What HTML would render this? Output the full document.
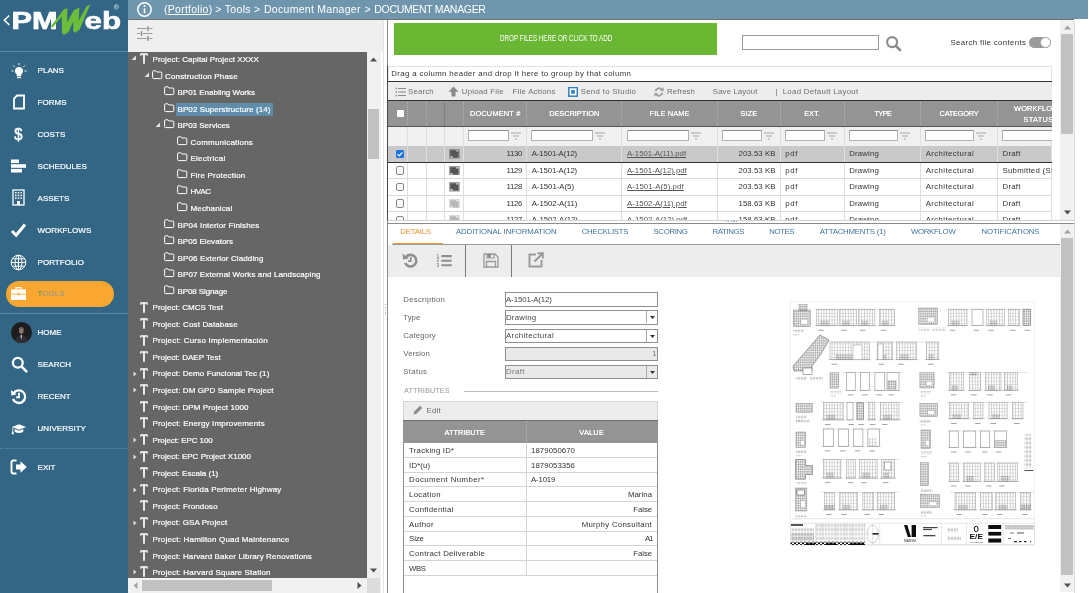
<!DOCTYPE html>
<html>
<head>
<meta charset="utf-8">
<title>Document Manager</title>
<style>
*{box-sizing:border-box;margin:0;padding:0}
html,body{width:1089px;height:593px;overflow:hidden;background:#fff;font-family:"Liberation Sans",sans-serif;font-size:8px;color:#333}
div,span,svg{position:absolute}
.t{white-space:nowrap;line-height:10px;height:10px}
.tab,.tn,.nl{margin-top:.7px}
.g,.gh{margin-top:.4px}
#side{left:0;top:0;width:128px;height:593px;background:#336685}
.nl{left:37.5px;color:#fff;font-size:8px;letter-spacing:.05px;white-space:nowrap;line-height:10px;-webkit-text-stroke:.2px currentColor}
#hdr{left:128px;top:0;width:960px;height:19px;background:#7096ad}
#hdr .t{color:#fff;font-size:10.5px;line-height:19px;height:19px;top:0}
#treebar{left:128px;top:19px;width:255px;height:33px;background:#efefef}
#tree{left:128px;top:52px;width:239px;height:526px;background:#666;overflow:hidden}
.tn{color:#fff;font-size:8px;white-space:nowrap;line-height:10px;height:10px;-webkit-text-stroke:.2px #fff}
.g{color:#333;font-size:7.8px;white-space:nowrap;line-height:10px;height:10px}
.gh{color:#fff;font-size:7.4px;white-space:nowrap;line-height:10px;height:10px;text-shadow:0 0 .3px #fff}
.tab{color:#41749a;font-size:7.8px;white-space:nowrap;line-height:10px;height:10px;letter-spacing:.05px}
</style>
</head>
<body><div id="root" style="left:0;top:0;width:1089px;height:593px;will-change:transform;overflow:hidden">
<div id="side">
<svg style="left:0;top:0;will-change:transform" width="128" height="50" viewBox="0 0 128 50"><path d="M9.300 15.500L4.300 20.200L9.300 24.900" fill="none" stroke="#fff" stroke-width="1.500"/><text transform="translate(11.600,28.800) scale(1.300,1)" font-family="Liberation Sans" font-weight="bold" font-size="23.600" fill="#fff" stroke="#fff" stroke-width=".7">PM</text><text transform="translate(84.600,28.800) scale(1.330,1)" font-family="Liberation Sans" font-weight="bold" font-size="23.600" fill="#fff" stroke="#fff" stroke-width=".6">eb</text><g fill="#6cbd3a"><path d="M50.800 26.300L64.800 8.600L67.400 9.600L52.600 27.800z"/><path d="M61.600 11.500L67.400 8.200L67 30L63.800 35L62 32.500z"/><path d="M63.800 35L62 32L74 10L79.400 7.800L68.600 32z"/><path d="M73.400 11L79.400 7.800L78.200 28.500L75 32.800L73.200 30.500z"/><path d="M75 32.800L73.500 30L86.600 6.200L90.200 4.400L79.600 29.500z"/></g><circle cx="116.400" cy="6.800" r="2.200" fill="none" stroke="#b8c9d5" stroke-width=".7"/><text x="115.100" y="8.300" font-family="Liberation Sans" font-size="3.600" font-weight="bold" fill="#b8c9d5">R</text></svg>
<div style="left:0;top:51px;width:128px;height:1px;background:#5c88a4"></div>
<div style="left:0;top:313px;width:128px;height:1px;background:#5f8aa5"></div>
<div style="left:0;top:448px;width:128px;height:0;border-top:1px dotted #5f8aa5"></div>
<div style="left:6px;top:281.300px;width:108px;height:25.400px;border-radius:13px;background:#f9a730"></div>
<span class="nl" style="top:65.0px;color:#fff">PLANS</span>
<span class="nl" style="top:97.0px;color:#fff">FORMS</span>
<span class="nl" style="top:129.0px;color:#fff">COSTS</span>
<span class="nl" style="top:161.0px;color:#fff">SCHEDULES</span>
<span class="nl" style="top:193.0px;color:#fff">ASSETS</span>
<span class="nl" style="top:225.0px;color:#fff">WORKFLOWS</span>
<span class="nl" style="top:257.0px;color:#fff">PORTFOLIO</span>
<span class="nl" style="top:288.5px;color:#a39a80"><span style="position:static;color:#6f9d4e">T</span>OOLS</span>
<span class="nl" style="top:327.5px;color:#fff">HOME</span>
<span class="nl" style="top:359.5px;color:#fff">SEARCH</span>
<span class="nl" style="top:391.5px;color:#fff">RECENT</span>
<span class="nl" style="top:423.0px;color:#fff">UNIVERSITY</span>
<span class="nl" style="top:462.0px;color:#fff">EXIT</span>
<svg style="left:10px;top:62px" width="18" height="18" viewBox="0 0 18 18"><path d="M9 5a4 4 0 0 0-2.3 7.3V14h4.6v-1.7A4 4 0 0 0 9 5z" fill="#fff"/><rect x="7" y="14.6" width="4" height="1.6" fill="#fff"/><g stroke="#fff" stroke-width="1"><path d="M9 1v2.2M3.2 3.6l1.5 1.5M14.8 3.6l-1.5 1.5M1.5 9h2M14.5 9h2"/></g></svg>
<svg style="left:12px;top:94px" width="14" height="17" viewBox="0 0 14 17"><path d="M5 1.5h7v13h-10v-10z" fill="none" stroke="#fff" stroke-width="1.8" stroke-linejoin="miter"/></svg>
<svg style="left:10px;top:125px;will-change:transform" width="18" height="20" viewBox="0 0 18 20"><text x="3.200" y="15.400" font-family="Liberation Sans" font-size="16.500" fill="#fff" stroke="#fff" stroke-width=".5" transform="translate(1.3,0) scale(.9,1)">$</text></svg>
<svg style="left:11px;top:159px" width="16" height="14" viewBox="0 0 16 14"><rect x="0" y="0.5" width="8" height="3.6" fill="#fff"/><rect x="0" y="5.2" width="15" height="3.6" fill="#fff"/><rect x="0" y="9.9" width="11" height="3.6" fill="#fff"/></svg>
<svg style="left:12px;top:189px" width="13" height="17" viewBox="0 0 13 17"><rect x="1" y="1" width="11" height="15" fill="none" stroke="#fff" stroke-width="1.3"/><g fill="#fff"><rect x="3" y="3" width="1.5" height="1.5"/><rect x="5.7" y="3" width="1.5" height="1.5"/><rect x="8.4" y="3" width="1.5" height="1.5"/><rect x="3" y="5.7" width="1.5" height="1.5"/><rect x="5.7" y="5.7" width="1.5" height="1.5"/><rect x="8.4" y="5.7" width="1.5" height="1.5"/><rect x="3" y="8.4" width="1.5" height="1.5"/><rect x="5.7" y="8.4" width="1.5" height="1.5"/><rect x="8.4" y="8.4" width="1.5" height="1.5"/><rect x="5" y="12" width="3" height="4"/></g></svg>
<svg style="left:10px;top:222px" width="17" height="16" viewBox="0 0 17 16"><path d="M2 9l4.2 4.2L15 2.5" fill="none" stroke="#fff" stroke-width="3"/></svg>
<svg style="left:10px;top:254px" width="17" height="17" viewBox="0 0 17 17"><g fill="none" stroke="#fff" stroke-width="1"><circle cx="8.5" cy="8.5" r="7.3"/><ellipse cx="8.5" cy="8.5" rx="3.4" ry="7.3"/><path d="M8.5 1.2v14.6M1.2 8.5h14.6M2.3 4.8h12.4M2.3 12.2h12.4"/></g></svg>
<svg style="left:10px;top:286px" width="17" height="15" viewBox="0 0 17 15"><path d="M6 3.4V1.6h5v1.8" fill="none" stroke="#fff" stroke-width="1.3"/><rect x="1" y="3.4" width="15" height="10.6" fill="#fff"/><path d="M1 8.2h15" stroke="#f9a730" stroke-width=".8"/><rect x="7.4" y="7.2" width="2.2" height="2" fill="#f9a730"/></svg>
<svg style="left:11px;top:322px" width="21" height="21" viewBox="0 0 21 21"><circle cx="10.500" cy="10.500" r="10.500" fill="#1e1d20"/><path d="M4 19q1.500-5 5-5.500l1.500 4 1.500-4q3.500.5 5 5.500a10.500 10.500 0 0 1-13 0z" fill="#2d2c31"/><ellipse cx="10.300" cy="8.600" rx="2.300" ry="3.300" fill="#8d7464"/><path d="M7.800 6.600q2.500-2.600 5 0l-.2 1.200q-2.300-1.400-4.600 0z" fill="#6b6b6b"/><path d="M10.300 12.500l-1 1.200 1 4 1-4z" fill="#b9b9b9"/></svg>
<svg style="left:10.5px;top:356px" width="18" height="18" viewBox="0 0 18 18"><circle cx="6.800" cy="6.800" r="4.900" fill="none" stroke="#fff" stroke-width="2.300"/><path d="M10.800 10.800l4.600 4.600" stroke="#fff" stroke-width="2.600" stroke-linecap="round"/></svg>
<svg style="left:10px;top:388px" width="18" height="17" viewBox="0 0 18 17"><path d="M3.6 5.2A6.3 6.3 0 1 1 3 11" fill="none" stroke="#fff" stroke-width="2.300"/><path d="M1 2l.4 5.400 5.200-.8z" fill="#fff"/><path d="M9 4.800v4.400H6.200" fill="none" stroke="#fff" stroke-width="1.900"/></svg>
<svg style="left:10.5px;top:422.5px" width="16" height="12" viewBox="0 0 20 15"><path d="M10 1.500L1 5l9 3.500L19 5z" fill="#fff"/><path d="M4.600 7.400v3.600q5.400 3 10.800 0V7.400L10 9.600z" fill="#fff"/><path d="M2.200 5.600v6" stroke="#fff" stroke-width="1"/><path d="M1.300 11h1.800l.4 3h-2.600z" fill="#fff"/></svg>
<svg style="left:10px;top:459px" width="18" height="16" viewBox="0 0 18 16"><path d="M6.500 1.500H3.200a1.700 1.700 0 0 0-1.700 1.700v9.600a1.700 1.700 0 0 0 1.700 1.700h3.300" fill="none" stroke="#fff" stroke-width="1.900"/><path d="M6 5.400h4.500V2.200L16.800 8l-6.300 5.800v-3.200H6z" fill="#fff"/></svg>
</div>
<div id="hdr">
<svg style="left:9px;top:2px" width="15" height="15" viewBox="0 0 15 15"><circle cx="7.5" cy="7.500" r="6.700" fill="none" stroke="#fff" stroke-width="1.500"/><rect x="6.700" y="6.300" width="1.600" height="4.900" fill="#fff"/><circle cx="7.500" cy="4.100" r="1" fill="#fff"/></svg>
<span class="t" style="left:36px;letter-spacing:0.263px;">(<span style="position:static;text-decoration:underline">Portfolio</span>)</span>
<span class="t" style="left:87.2px;letter-spacing:0.331px;">&gt; Tools &gt;</span>
<span class="t" style="left:136px;letter-spacing:0.281px;">Document Manager</span>
<span class="t" style="left:236.6px;letter-spacing:-0.233px;">&gt;</span>
<span class="t" style="left:246.3px;letter-spacing:-0.324px;">DOCUMENT MANAGER</span>
</div>
<div id="treebar">
<svg style="left:9px;top:7px" width="16" height="15" viewBox="0 0 16 15"><g stroke="#9c9c9c" stroke-width="1"><path d="M0 2.500h15.500M0 7.500h15.500M0 12.500h15.500"/></g><g fill="#8e8e8e" stroke="#efefef" stroke-width=".6"><rect x="9.900" y="-.1" width="2.100" height="5.200"/><rect x="3.400" y="4.900" width="2.100" height="5.200"/><rect x="9.900" y="9.900" width="2.100" height="5.200"/></g></svg>
</div>
<div id="tree">
<svg style="left:12px;top:1.35px" width="8" height="11" viewBox="0 0 8 11"><path d="M0.300 0.300h7.400v2.600h-1v-1.100h-1.850v8.900h-1.700v-8.900h-1.850v1.100h-1z" fill="#fff"/></svg>
<svg style="left:2.5px;top:3.35px" width="5.500" height="5.500" viewBox="0 0 5 5"><path d="M4.600 0.400v4.200h-4.200z" fill="#e2e2e2"/></svg>
<span class="tn" style="left:24.5px;top:2.35px;letter-spacing:0.047px;">Project: Capital Project XXXX</span>
<svg style="left:24px;top:17.6px" width="11" height="10" viewBox="0 0 11 10"><path d="M0.600 1.800a1 1 0 0 1 1-1h2.200l1 1.200h4a1 1 0 0 1 1 1v4.600a1 1 0 0 1-1 1h-7.200a1 1 0 0 1-1-1z" fill="none" stroke="#fff" stroke-width="1"/></svg>
<svg style="left:15.5px;top:19.9px" width="5.500" height="5.500" viewBox="0 0 5 5"><path d="M4.600 0.400v4.200h-4.200z" fill="#e2e2e2"/></svg>
<span class="tn" style="left:37px;top:18.9px;letter-spacing:0.166px;">Construction Phase</span>
<svg style="left:35.7px;top:34.15px" width="11" height="10" viewBox="0 0 11 10"><path d="M0.600 1.800a1 1 0 0 1 1-1h2.200l1 1.200h4a1 1 0 0 1 1 1v4.600a1 1 0 0 1-1 1h-7.200a1 1 0 0 1-1-1z" fill="none" stroke="#fff" stroke-width="1"/></svg>
<span class="tn" style="left:49.5px;top:35.45px;letter-spacing:-0.009px;">BP01 Enabling Works</span>
<svg style="left:35.7px;top:50.7px" width="11" height="10" viewBox="0 0 11 10"><path d="M0.600 1.800a1 1 0 0 1 1-1h2.200l1 1.200h4a1 1 0 0 1 1 1v4.600a1 1 0 0 1-1 1h-7.200a1 1 0 0 1-1-1z" fill="none" stroke="#fff" stroke-width="1"/></svg>
<div style="left:48px;top:50.5px;width:97px;height:13px;background:#5f8cab"></div>
<span class="tn" style="left:49.5px;top:52px;letter-spacing:0.096px;">BP02 Superstructure (14)</span>
<svg style="left:35.7px;top:67.25px" width="11" height="10" viewBox="0 0 11 10"><path d="M0.600 1.800a1 1 0 0 1 1-1h2.200l1 1.200h4a1 1 0 0 1 1 1v4.600a1 1 0 0 1-1 1h-7.200a1 1 0 0 1-1-1z" fill="none" stroke="#fff" stroke-width="1"/></svg>
<svg style="left:27.2px;top:69.55px" width="5.500" height="5.500" viewBox="0 0 5 5"><path d="M4.600 0.400v4.200h-4.200z" fill="#e2e2e2"/></svg>
<span class="tn" style="left:49.5px;top:68.55px;letter-spacing:-0.013px;">BP03 Services</span>
<svg style="left:48.9px;top:83.8px" width="11" height="10" viewBox="0 0 11 10"><path d="M0.600 1.800a1 1 0 0 1 1-1h2.200l1 1.200h4a1 1 0 0 1 1 1v4.600a1 1 0 0 1-1 1h-7.200a1 1 0 0 1-1-1z" fill="none" stroke="#fff" stroke-width="1"/></svg>
<span class="tn" style="left:62.5px;top:85.1px;letter-spacing:0.209px;">Communications</span>
<svg style="left:48.9px;top:100.35px" width="11" height="10" viewBox="0 0 11 10"><path d="M0.600 1.800a1 1 0 0 1 1-1h2.200l1 1.200h4a1 1 0 0 1 1 1v4.600a1 1 0 0 1-1 1h-7.200a1 1 0 0 1-1-1z" fill="none" stroke="#fff" stroke-width="1"/></svg>
<span class="tn" style="left:62.5px;top:101.65px;letter-spacing:0.255px;">Electrical</span>
<svg style="left:48.9px;top:116.9px" width="11" height="10" viewBox="0 0 11 10"><path d="M0.600 1.800a1 1 0 0 1 1-1h2.200l1 1.200h4a1 1 0 0 1 1 1v4.600a1 1 0 0 1-1 1h-7.200a1 1 0 0 1-1-1z" fill="none" stroke="#fff" stroke-width="1"/></svg>
<span class="tn" style="left:62.5px;top:118.2px;letter-spacing:0.199px;">Fire Protection</span>
<svg style="left:48.9px;top:133.45px" width="11" height="10" viewBox="0 0 11 10"><path d="M0.600 1.800a1 1 0 0 1 1-1h2.200l1 1.200h4a1 1 0 0 1 1 1v4.600a1 1 0 0 1-1 1h-7.200a1 1 0 0 1-1-1z" fill="none" stroke="#fff" stroke-width="1"/></svg>
<span class="tn" style="left:62.5px;top:134.75px;letter-spacing:-0.408px;">HVAC</span>
<svg style="left:48.9px;top:150px" width="11" height="10" viewBox="0 0 11 10"><path d="M0.600 1.800a1 1 0 0 1 1-1h2.200l1 1.200h4a1 1 0 0 1 1 1v4.600a1 1 0 0 1-1 1h-7.200a1 1 0 0 1-1-1z" fill="none" stroke="#fff" stroke-width="1"/></svg>
<span class="tn" style="left:62.5px;top:151.3px;letter-spacing:0.134px;">Mechanical</span>
<svg style="left:35.7px;top:166.55px" width="11" height="10" viewBox="0 0 11 10"><path d="M0.600 1.800a1 1 0 0 1 1-1h2.200l1 1.200h4a1 1 0 0 1 1 1v4.600a1 1 0 0 1-1 1h-7.200a1 1 0 0 1-1-1z" fill="none" stroke="#fff" stroke-width="1"/></svg>
<span class="tn" style="left:49.5px;top:167.85px;letter-spacing:0.150px;">BP04 Interior Finishes</span>
<svg style="left:35.7px;top:183.1px" width="11" height="10" viewBox="0 0 11 10"><path d="M0.600 1.800a1 1 0 0 1 1-1h2.200l1 1.200h4a1 1 0 0 1 1 1v4.600a1 1 0 0 1-1 1h-7.200a1 1 0 0 1-1-1z" fill="none" stroke="#fff" stroke-width="1"/></svg>
<span class="tn" style="left:49.5px;top:184.4px;letter-spacing:0.033px;">BP05 Elevators</span>
<svg style="left:35.7px;top:199.65px" width="11" height="10" viewBox="0 0 11 10"><path d="M0.600 1.800a1 1 0 0 1 1-1h2.200l1 1.200h4a1 1 0 0 1 1 1v4.600a1 1 0 0 1-1 1h-7.200a1 1 0 0 1-1-1z" fill="none" stroke="#fff" stroke-width="1"/></svg>
<span class="tn" style="left:49.5px;top:200.95px;letter-spacing:0.129px;">BP06 Exterior Cladding</span>
<svg style="left:35.7px;top:216.2px" width="11" height="10" viewBox="0 0 11 10"><path d="M0.600 1.800a1 1 0 0 1 1-1h2.200l1 1.200h4a1 1 0 0 1 1 1v4.600a1 1 0 0 1-1 1h-7.200a1 1 0 0 1-1-1z" fill="none" stroke="#fff" stroke-width="1"/></svg>
<span class="tn" style="left:49.5px;top:217.5px;letter-spacing:0.113px;">BP07 External Works and Landscaping</span>
<svg style="left:35.7px;top:232.75px" width="11" height="10" viewBox="0 0 11 10"><path d="M0.600 1.800a1 1 0 0 1 1-1h2.200l1 1.200h4a1 1 0 0 1 1 1v4.600a1 1 0 0 1-1 1h-7.200a1 1 0 0 1-1-1z" fill="none" stroke="#fff" stroke-width="1"/></svg>
<span class="tn" style="left:49.5px;top:234.05px;letter-spacing:-0.104px;">BP08 Signage</span>
<svg style="left:12px;top:249.6px" width="8" height="11" viewBox="0 0 8 11"><path d="M0.300 0.300h7.400v2.600h-1v-1.100h-1.850v8.900h-1.700v-8.900h-1.850v1.100h-1z" fill="#fff"/></svg>
<span class="tn" style="left:24.5px;top:250.6px;letter-spacing:0.042px;">Project: CMCS Test</span>
<svg style="left:12px;top:266.15px" width="8" height="11" viewBox="0 0 8 11"><path d="M0.300 0.300h7.400v2.600h-1v-1.100h-1.850v8.900h-1.700v-8.900h-1.850v1.100h-1z" fill="#fff"/></svg>
<span class="tn" style="left:24.5px;top:267.15px;letter-spacing:0.134px;">Project: Cost Database</span>
<svg style="left:12px;top:282.7px" width="8" height="11" viewBox="0 0 8 11"><path d="M0.300 0.300h7.400v2.600h-1v-1.100h-1.850v8.900h-1.700v-8.900h-1.850v1.100h-1z" fill="#fff"/></svg>
<span class="tn" style="left:24.5px;top:283.7px;letter-spacing:0.208px;">Project: Curso Implementación</span>
<svg style="left:12px;top:299.25px" width="8" height="11" viewBox="0 0 8 11"><path d="M0.300 0.300h7.400v2.600h-1v-1.100h-1.850v8.900h-1.700v-8.900h-1.850v1.100h-1z" fill="#fff"/></svg>
<span class="tn" style="left:24.5px;top:300.25px;letter-spacing:0.032px;">Project: DAEP Test</span>
<svg style="left:12px;top:315.8px" width="8" height="11" viewBox="0 0 8 11"><path d="M0.300 0.300h7.400v2.600h-1v-1.100h-1.850v8.900h-1.700v-8.900h-1.850v1.100h-1z" fill="#fff"/></svg>
<svg style="left:4.5px;top:318.8px" width="4" height="6" viewBox="0 0 4 6"><path d="M0.500 0.500l3 2.500l-3 2.500z" fill="#ddd"/></svg>
<span class="tn" style="left:24.5px;top:316.8px;letter-spacing:0.090px;">Project: Demo Funcional Tec (1)</span>
<svg style="left:12px;top:332.35px" width="8" height="11" viewBox="0 0 8 11"><path d="M0.300 0.300h7.400v2.600h-1v-1.100h-1.850v8.900h-1.700v-8.900h-1.850v1.100h-1z" fill="#fff"/></svg>
<svg style="left:4.5px;top:335.35px" width="4" height="6" viewBox="0 0 4 6"><path d="M0.500 0.500l3 2.500l-3 2.500z" fill="#ddd"/></svg>
<span class="tn" style="left:24.5px;top:333.35px;letter-spacing:0.106px;">Project: DM GPD Sample Project</span>
<svg style="left:12px;top:348.9px" width="8" height="11" viewBox="0 0 8 11"><path d="M0.300 0.300h7.400v2.600h-1v-1.100h-1.850v8.900h-1.700v-8.900h-1.850v1.100h-1z" fill="#fff"/></svg>
<span class="tn" style="left:24.5px;top:349.9px;letter-spacing:0.070px;">Project: DPM Project 1000</span>
<svg style="left:12px;top:365.45px" width="8" height="11" viewBox="0 0 8 11"><path d="M0.300 0.300h7.400v2.600h-1v-1.100h-1.850v8.900h-1.700v-8.900h-1.850v1.100h-1z" fill="#fff"/></svg>
<span class="tn" style="left:24.5px;top:366.45px;letter-spacing:0.168px;">Project: Energy Improvements</span>
<svg style="left:12px;top:382px" width="8" height="11" viewBox="0 0 8 11"><path d="M0.300 0.300h7.400v2.600h-1v-1.100h-1.850v8.900h-1.700v-8.900h-1.850v1.100h-1z" fill="#fff"/></svg>
<svg style="left:4.5px;top:385px" width="4" height="6" viewBox="0 0 4 6"><path d="M0.500 0.500l3 2.500l-3 2.500z" fill="#ddd"/></svg>
<span class="tn" style="left:24.5px;top:383px;letter-spacing:-0.073px;">Project: EPC 100</span>
<svg style="left:12px;top:398.55px" width="8" height="11" viewBox="0 0 8 11"><path d="M0.300 0.300h7.400v2.600h-1v-1.100h-1.850v8.900h-1.700v-8.900h-1.850v1.100h-1z" fill="#fff"/></svg>
<svg style="left:4.5px;top:401.55px" width="4" height="6" viewBox="0 0 4 6"><path d="M0.500 0.500l3 2.500l-3 2.500z" fill="#ddd"/></svg>
<span class="tn" style="left:24.5px;top:399.55px;letter-spacing:0.009px;">Project: EPC Project X1000</span>
<svg style="left:12px;top:415.1px" width="8" height="11" viewBox="0 0 8 11"><path d="M0.300 0.300h7.400v2.600h-1v-1.100h-1.850v8.900h-1.700v-8.900h-1.850v1.100h-1z" fill="#fff"/></svg>
<span class="tn" style="left:24.5px;top:416.1px;letter-spacing:0.024px;">Project: Escala (1)</span>
<svg style="left:12px;top:431.65px" width="8" height="11" viewBox="0 0 8 11"><path d="M0.300 0.300h7.400v2.600h-1v-1.100h-1.850v8.900h-1.700v-8.900h-1.850v1.100h-1z" fill="#fff"/></svg>
<svg style="left:4.5px;top:434.65px" width="4" height="6" viewBox="0 0 4 6"><path d="M0.500 0.500l3 2.500l-3 2.500z" fill="#ddd"/></svg>
<span class="tn" style="left:24.5px;top:432.65px;letter-spacing:0.156px;">Project: Florida Perimeter Highway</span>
<svg style="left:12px;top:448.2px" width="8" height="11" viewBox="0 0 8 11"><path d="M0.300 0.300h7.400v2.600h-1v-1.100h-1.850v8.900h-1.700v-8.900h-1.850v1.100h-1z" fill="#fff"/></svg>
<span class="tn" style="left:24.5px;top:449.2px;letter-spacing:0.121px;">Project: Frondoso</span>
<svg style="left:12px;top:464.75px" width="8" height="11" viewBox="0 0 8 11"><path d="M0.300 0.300h7.400v2.600h-1v-1.100h-1.850v8.900h-1.700v-8.900h-1.850v1.100h-1z" fill="#fff"/></svg>
<svg style="left:4.5px;top:467.75px" width="4" height="6" viewBox="0 0 4 6"><path d="M0.500 0.500l3 2.500l-3 2.500z" fill="#ddd"/></svg>
<span class="tn" style="left:24.5px;top:465.75px;letter-spacing:0.089px;">Project: GSA Project</span>
<svg style="left:12px;top:481.3px" width="8" height="11" viewBox="0 0 8 11"><path d="M0.300 0.300h7.400v2.600h-1v-1.100h-1.850v8.900h-1.700v-8.900h-1.850v1.100h-1z" fill="#fff"/></svg>
<span class="tn" style="left:24.5px;top:482.3px;letter-spacing:0.187px;">Project: Hamilton Quad Maintenance</span>
<svg style="left:12px;top:497.85px" width="8" height="11" viewBox="0 0 8 11"><path d="M0.300 0.300h7.400v2.600h-1v-1.100h-1.850v8.900h-1.700v-8.900h-1.850v1.100h-1z" fill="#fff"/></svg>
<span class="tn" style="left:24.5px;top:498.85px;letter-spacing:0.122px;">Project: Harvard Baker Library Renovations</span>
<svg style="left:12px;top:514.4px" width="8" height="11" viewBox="0 0 8 11"><path d="M0.300 0.300h7.400v2.600h-1v-1.100h-1.850v8.900h-1.700v-8.900h-1.850v1.100h-1z" fill="#fff"/></svg>
<svg style="left:4.5px;top:517.4px" width="4" height="6" viewBox="0 0 4 6"><path d="M0.500 0.500l3 2.500l-3 2.500z" fill="#ddd"/></svg>
<span class="tn" style="left:24.5px;top:515.4px;letter-spacing:0.170px;">Project: Harvard Square Station</span>
</div>
<div style="left:367px;top:51px;width:13px;height:527px;background:#f1f1f1"></div>
<div style="left:368px;top:109px;width:11px;height:50px;background:#c1c1c1"></div>
<svg style="left:370px;top:57px" width="7" height="5" viewBox="0 0 7 5"><path d="M0 4.500L3.500 0.500L7 4.500z" fill="#505050"/></svg>
<svg style="left:370px;top:568px" width="7" height="5" viewBox="0 0 7 5"><path d="M0 0.500L3.500 4.500L7 0.500z" fill="#505050"/></svg>
<div style="left:128px;top:578px;width:239px;height:15px;background:#f1f1f1"></div>
<div style="left:142px;top:580px;width:130px;height:11px;background:#c1c1c1"></div>
<svg style="left:133px;top:582px" width="5" height="7" viewBox="0 0 5 7"><path d="M4.500 0L0.500 3.500L4.500 7z" fill="#a3a3a3"/></svg>
<svg style="left:357px;top:582px" width="5" height="7" viewBox="0 0 5 7"><path d="M0.500 0L4.500 3.500L0.500 7z" fill="#505050"/></svg>
<div style="left:367px;top:578px;width:13.500px;height:15px;background:#dcdcdc"></div>
<div style="left:380px;top:52px;width:.700px;height:541px;background:#f1f1f1"></div>
<div style="left:383.300px;top:19px;width:.800px;height:574px;background:#e4e4e4"></div>
<div style="left:387px;top:19px;width:1.300px;height:574px;background:#8a8a8a"></div>
<div style="left:387px;top:66px;width:1.300px;height:154px;background:#484848"></div>
<div style="left:385px;top:304px;width:1.200px;height:1.200px;background:#6f9cc0;border-radius:.6px"></div>
<div style="left:385px;top:306.5px;width:1.200px;height:1.200px;background:#6f9cc0;border-radius:.6px"></div>
<div style="left:385px;top:309px;width:1.200px;height:1.200px;background:#6f9cc0;border-radius:.6px"></div>
<div style="left:385px;top:311.5px;width:1.200px;height:1.200px;background:#6f9cc0;border-radius:.6px"></div>
<div style="left:385px;top:314px;width:1.200px;height:1.200px;background:#6f9cc0;border-radius:.6px"></div>
<div style="left:394px;top:23px;width:323px;height:32px;background:#6ab733"></div>
<span class="t" style="left:499.500px;top:34.400px;color:#fff;font-size:8.200px;transform-origin:0 50%;transform:scaleX(0.7644)">DROP FILES HERE OR CLICK TO ADD</span>
<div style="left:128px;top:19px;width:946px;height:.800px;background:#707070"></div>
<div style="left:742px;top:35px;width:137px;height:15px;border:1px solid #9a9a9a;background:#fff"></div>
<svg style="left:884.500px;top:35px" width="18" height="18" viewBox="0 0 18 18"><circle cx="7.100" cy="7.100" r="5" fill="none" stroke="#8c8c8c" stroke-width="2.200"/><path d="M11 11l4 4" stroke="#8c8c8c" stroke-width="2.600" stroke-linecap="round"/></svg>
<span class="g" style="left:950.500px;top:37.500px;letter-spacing:0.360px;">Search file contents</span>
<div style="left:1029px;top:37px;width:22px;height:11px;border-radius:6px;background:#9b9b9b"></div>
<div style="left:1040px;top:37px;width:11px;height:11px;border-radius:5.500px;background:#fff;border:1px solid #a8a8a8"></div>
<div style="left:388px;top:65.800px;width:664px;height:16px;border:1px solid #e2e2e2;border-bottom:none;background:#fff"></div>
<span class="g" style="left:391.300px;top:68.300px;letter-spacing:0.366px;">Drag a column header and drop it here to group by that column</span>
<div style="left:388px;top:80.900px;width:664px;height:1.100px;background:#333"></div>
<div style="left:388px;top:82px;width:664px;height:18px;background:#ededed"></div>
<div style="left:388px;top:100px;width:664px;height:1px;background:#333"></div>
<span class="g" style="left:408.1px;top:87px;color:#6e6e6e;letter-spacing:0.148px;">Search</span>
<span class="g" style="left:461.8px;top:87px;color:#6e6e6e;letter-spacing:0.232px;">Upload File</span>
<span class="g" style="left:512.5px;top:87px;color:#6e6e6e;letter-spacing:0.268px;">File Actions</span>
<span class="g" style="left:580.7px;top:87px;color:#6e6e6e;letter-spacing:0.316px;">Send to Studio</span>
<span class="g" style="left:667px;top:87px;color:#6e6e6e;letter-spacing:0.099px;">Refresh</span>
<span class="g" style="left:712.8px;top:87px;color:#6e6e6e;letter-spacing:0.131px;">Save Layout</span>
<span class="g" style="left:775.5px;top:87px;color:#6e6e6e;letter-spacing:-0.227px;">|</span>
<span class="g" style="left:782.7px;top:87px;color:#6e6e6e;letter-spacing:0.315px;">Load Default Layout</span>
<svg style="left:395px;top:86.500px" width="11" height="10" viewBox="0 0 11 10"><g stroke="#8a8a8a" stroke-width="1"><path d="M3 1.500h8M3 5h8M3 8.500h8"/></g><g fill="#8a8a8a"><rect x="0.500" y="0.700" width="1.300" height="1.600"/><rect x="0.500" y="4.200" width="1.300" height="1.600"/><rect x="0.500" y="7.700" width="1.300" height="1.600"/></g></svg>
<svg style="left:448px;top:86px" width="11" height="11" viewBox="0 0 11 11"><path d="M5.500 0.500L10.500 5.800H7.500V10.500H3.500V5.800H0.500z" fill="#8a8a8a"/></svg>
<svg style="left:568px;top:86.500px" width="10" height="10" viewBox="0 0 10 10"><rect x="0.800" y="0.600" width="8.500" height="8.600" fill="#fff" stroke="#2f7fc0" stroke-width="1.500"/><rect x="3.200" y="3" width="3.600" height="3.800" fill="#2f7fc0"/></svg>
<svg style="left:654px;top:86.500px" width="10" height="10" viewBox="0 0 10 10"><path d="M1.500 4.300A3.600 3.600 0 0 1 8 2.800M8.500 5.700A3.600 3.600 0 0 1 2 7.200" fill="none" stroke="#a0a0a0" stroke-width="1.900"/><path d="M9.700 0.300v3.700h-3.700zM0.300 9.700v-3.700h3.700z" fill="#a0a0a0"/></svg>
<div style="left:388px;top:101px;width:664px;height:25px;background:#949494"></div>
<div style="left:388px;top:126px;width:664px;height:1px;background:#555"></div>
<div style="left:388px;top:127px;width:664px;height:18.5px;background:#f0f0f0"></div>
<div style="left:388px;top:145.5px;width:664px;height:16.8px;background:#c9c9c9"></div>
<div style="left:388px;top:178.1px;width:664px;height:1px;background:#d9d9d9"></div>
<div style="left:388px;top:194.6px;width:664px;height:1px;background:#d9d9d9"></div>
<div style="left:388px;top:211.1px;width:664px;height:1px;background:#d9d9d9"></div>
<div style="left:407px;top:101.5px;width:0;height:24.5px;border-left:1px dotted #b4b4b4"></div>
<div style="left:407px;top:127px;width:0;height:93px;border-left:1px solid #dedede"></div>
<div style="left:426px;top:101.5px;width:0;height:24.5px;border-left:1px dotted #b4b4b4"></div>
<div style="left:426px;top:127px;width:0;height:93px;border-left:1px solid #dedede"></div>
<div style="left:444px;top:101.5px;width:0;height:24.5px;border-left:1px solid #808080"></div>
<div style="left:444px;top:127px;width:0;height:93px;border-left:1px solid #dedede"></div>
<div style="left:463px;top:101.5px;width:0;height:24.5px;border-left:1px dotted #b4b4b4"></div>
<div style="left:463px;top:127px;width:0;height:93px;border-left:1px solid #dedede"></div>
<div style="left:526px;top:101.5px;width:0;height:24.5px;border-left:1px dotted #b4b4b4"></div>
<div style="left:526px;top:127px;width:0;height:93px;border-left:1px solid #dedede"></div>
<div style="left:621px;top:101.5px;width:0;height:24.5px;border-left:1px dotted #b4b4b4"></div>
<div style="left:621px;top:127px;width:0;height:93px;border-left:1px solid #dedede"></div>
<div style="left:717px;top:101.5px;width:0;height:24.5px;border-left:1px dotted #b4b4b4"></div>
<div style="left:717px;top:127px;width:0;height:93px;border-left:1px solid #dedede"></div>
<div style="left:780px;top:101.5px;width:0;height:24.5px;border-left:1px dotted #b4b4b4"></div>
<div style="left:780px;top:127px;width:0;height:93px;border-left:1px solid #dedede"></div>
<div style="left:844px;top:101.5px;width:0;height:24.5px;border-left:1px dotted #b4b4b4"></div>
<div style="left:844px;top:127px;width:0;height:93px;border-left:1px solid #dedede"></div>
<div style="left:920px;top:101.5px;width:0;height:24.5px;border-left:1px dotted #b4b4b4"></div>
<div style="left:920px;top:127px;width:0;height:93px;border-left:1px solid #dedede"></div>
<div style="left:997px;top:101.5px;width:0;height:24.5px;border-left:1px dotted #b4b4b4"></div>
<div style="left:997px;top:127px;width:0;height:93px;border-left:1px solid #dedede"></div>
<div style="left:1051px;top:127px;width:1px;height:93px;background:#e0e0e0"></div>
<div style="left:388px;top:161.6px;width:664px;height:1.200px;background:#333"></div>
<span class="gh" style="left:469.9px;top:109px;letter-spacing:0.181px;">DOCUMENT #</span>
<span class="gh" style="left:549.2px;top:109px;letter-spacing:-0.043px;">DESCRIPTION</span>
<span class="gh" style="left:649.6px;top:109px;letter-spacing:0.093px;">FILE NAME</span>
<span class="gh" style="left:740.2px;top:109px;letter-spacing:0.163px;">SIZE</span>
<span class="gh" style="left:804.2px;top:109px;letter-spacing:-0.032px;">EXT.</span>
<span class="gh" style="left:874.4px;top:109px;letter-spacing:-0.557px;">TYPE</span>
<span class="gh" style="left:939.6px;top:109px;letter-spacing:-0.256px;">CATEGORY</span>
<span class="gh" style="left:1014.100px;top:104px;letter-spacing:0.075px;">WORKFLOW</span>
<span class="gh" style="left:1023.500px;top:114.500px;letter-spacing:0.318px;">STATUS</span>
<div style="left:396.500px;top:109.500px;width:7px;height:7px;background:#fff;border-radius:1px"></div>
<div style="left:468px;top:129.500px;width:41px;height:11.500px;border:1px solid #b2b2b2;border-top-color:#8f8f8f;background:#fff"></div>
<svg style="left:511.2px;top:132px" width="10" height="8" viewBox="0 0 10 8"><g stroke="#a6a6a6" stroke-width="1"><path d="M0 1h10M2 4h6M4 7h2"/></g></svg>
<div style="left:530.5px;top:129.500px;width:62.5px;height:11.500px;border:1px solid #b2b2b2;border-top-color:#8f8f8f;background:#fff"></div>
<svg style="left:595.2px;top:132px" width="10" height="8" viewBox="0 0 10 8"><g stroke="#a6a6a6" stroke-width="1"><path d="M0 1h10M2 4h6M4 7h2"/></g></svg>
<div style="left:627px;top:129.500px;width:61.5px;height:11.500px;border:1px solid #b2b2b2;border-top-color:#8f8f8f;background:#fff"></div>
<svg style="left:690.7px;top:132px" width="10" height="8" viewBox="0 0 10 8"><g stroke="#a6a6a6" stroke-width="1"><path d="M0 1h10M2 4h6M4 7h2"/></g></svg>
<div style="left:722px;top:129.500px;width:39.5px;height:11.500px;border:1px solid #b2b2b2;border-top-color:#8f8f8f;background:#fff"></div>
<svg style="left:763.7px;top:132px" width="10" height="8" viewBox="0 0 10 8"><g stroke="#a6a6a6" stroke-width="1"><path d="M0 1h10M2 4h6M4 7h2"/></g></svg>
<div style="left:785px;top:129.500px;width:40px;height:11.500px;border:1px solid #b2b2b2;border-top-color:#8f8f8f;background:#fff"></div>
<svg style="left:827.2px;top:132px" width="10" height="8" viewBox="0 0 10 8"><g stroke="#a6a6a6" stroke-width="1"><path d="M0 1h10M2 4h6M4 7h2"/></g></svg>
<div style="left:849px;top:129.500px;width:48.5px;height:11.500px;border:1px solid #b2b2b2;border-top-color:#8f8f8f;background:#fff"></div>
<svg style="left:899.7px;top:132px" width="10" height="8" viewBox="0 0 10 8"><g stroke="#a6a6a6" stroke-width="1"><path d="M0 1h10M2 4h6M4 7h2"/></g></svg>
<div style="left:925px;top:129.500px;width:49px;height:11.500px;border:1px solid #b2b2b2;border-top-color:#8f8f8f;background:#fff"></div>
<svg style="left:976.2px;top:132px" width="10" height="8" viewBox="0 0 10 8"><g stroke="#a6a6a6" stroke-width="1"><path d="M0 1h10M2 4h6M4 7h2"/></g></svg>
<div style="left:1002px;top:129.500px;width:50px;height:11.500px;border:1px solid #b2b2b2;border-top-color:#8f8f8f;border-right:none;background:#fff"></div>
<div style="left:396px;top:149.9px;width:8px;height:8px;background:#1a73e8;border-radius:1.500px"></div>
<svg style="left:396px;top:149.9px" width="8" height="8" viewBox="0 0 8 8"><path d="M1.600 4.200l1.700 1.700L6.400 2.300" fill="none" stroke="#fff" stroke-width="1.200"/></svg>
<svg style="left:448.800px;top:149.2px" width="10.800" height="9.600" viewBox="0 0 10.800 9.600"><rect x="0" y="0" width="10.800" height="9.600" fill="#6a6a6a" opacity=".62"/><path d="M1.300 1.200h5.800v1.400h2.400v5.800h-5.800v-1.400h-2.400z" fill="#555"/><path d="M7.100 1.200h2.400v1.400h-2.400zM1.300 7h2.400v1.400h-2.400z" fill="#fff" opacity=".35"/></svg>
<span class="g" style="left:506.6px;top:148.9px;letter-spacing:-0.368px;">1130</span>
<span class="g" style="left:531.7px;top:148.9px;letter-spacing:-0.118px;">A-1501-A(12)</span>
<span class="g" style="left:627.1px;top:148.9px;letter-spacing:-0.016px;text-decoration:underline;color:#555;">A-1501-A(11).pdf</span>
<span class="g" style="left:738.6px;top:148.9px;letter-spacing:0.053px;">203.53 KB</span>
<span class="g" style="left:785.2px;top:148.9px;letter-spacing:0.653px;">pdf</span>
<span class="g" style="left:849.2px;top:148.9px;letter-spacing:0.184px;">Drawing</span>
<span class="g" style="left:925.7px;top:148.9px;letter-spacing:0.396px;">Architectural</span>
<span class="g" style="left:1002.5px;top:148.9px;letter-spacing:0.260px;">Draft</span>
<div style="left:395.800px;top:166.25px;width:8.500px;height:8.500px;background:#fff;border:1px solid #858585;border-radius:2px"></div>
<svg style="left:448.800px;top:165.75px" width="10.800" height="9.600" viewBox="0 0 10.800 9.600"><rect x="0" y="0" width="10.800" height="9.600" fill="#6a6a6a" opacity=".62"/><path d="M1.300 1.200h5.800v1.400h2.400v5.800h-5.800v-1.400h-2.400z" fill="#555"/><path d="M7.100 1.200h2.400v1.400h-2.400zM1.300 7h2.400v1.400h-2.400z" fill="#fff" opacity=".35"/></svg>
<span class="g" style="left:506.6px;top:165.45px;letter-spacing:-0.368px;">1129</span>
<span class="g" style="left:531.7px;top:165.45px;letter-spacing:-0.118px;">A-1501-A(12)</span>
<span class="g" style="left:627.1px;top:165.45px;letter-spacing:-0.008px;text-decoration:underline;color:#555;">A-1501-A(12).pdf</span>
<span class="g" style="left:738.6px;top:165.45px;letter-spacing:0.053px;">203.53 KB</span>
<span class="g" style="left:785.2px;top:165.45px;letter-spacing:0.653px;">pdf</span>
<span class="g" style="left:849.2px;top:165.45px;letter-spacing:0.184px;">Drawing</span>
<span class="g" style="left:925.7px;top:165.45px;letter-spacing:0.396px;">Architectural</span>
<span class="g" style="left:1002.5px;top:165.45px;letter-spacing:0.275px;">Submitted (S1</span>
<div style="left:395.800px;top:182.65px;width:8.500px;height:8.500px;background:#fff;border:1px solid #858585;border-radius:2px"></div>
<svg style="left:448.800px;top:182.15px" width="10.800" height="9.600" viewBox="0 0 10.800 9.600"><rect x="0" y="0" width="10.800" height="9.600" fill="#6a6a6a" opacity=".62"/><path d="M1.300 1.200h5.800v1.400h2.400v5.800h-5.800v-1.400h-2.400z" fill="#555"/><path d="M7.100 1.200h2.400v1.400h-2.400zM1.300 7h2.400v1.400h-2.400z" fill="#fff" opacity=".35"/></svg>
<span class="g" style="left:506.6px;top:181.85px;letter-spacing:-0.368px;">1128</span>
<span class="g" style="left:531.7px;top:181.85px;letter-spacing:-0.017px;">A-1501-A(5)</span>
<span class="g" style="left:627.1px;top:181.85px;letter-spacing:0.074px;text-decoration:underline;color:#555;">A-1501-A(5).pdf</span>
<span class="g" style="left:738.6px;top:181.85px;letter-spacing:0.053px;">203.53 KB</span>
<span class="g" style="left:785.2px;top:181.85px;letter-spacing:0.653px;">pdf</span>
<span class="g" style="left:849.2px;top:181.85px;letter-spacing:0.184px;">Drawing</span>
<span class="g" style="left:925.7px;top:181.85px;letter-spacing:0.396px;">Architectural</span>
<span class="g" style="left:1002.5px;top:181.85px;letter-spacing:0.260px;">Draft</span>
<div style="left:395.800px;top:199.15px;width:8.500px;height:8.500px;background:#fff;border:1px solid #858585;border-radius:2px"></div>
<svg style="left:448.800px;top:198.65px" width="10.800" height="9.600" viewBox="0 0 10.800 9.600"><rect x="0" y="0" width="10.800" height="9.600" fill="#c4c4c4" opacity=".62"/><path d="M1.300 1.200h5.800v1.400h2.400v5.800h-5.800v-1.400h-2.400z" fill="#b8b8b8"/><path d="M7.100 1.200h2.400v1.400h-2.400zM1.300 7h2.400v1.400h-2.400z" fill="#fff" opacity=".35"/></svg>
<span class="g" style="left:506.6px;top:198.35px;letter-spacing:-0.368px;">1126</span>
<span class="g" style="left:531.7px;top:198.35px;letter-spacing:-0.053px;">A-1502-A(11)</span>
<span class="g" style="left:627.1px;top:198.35px;letter-spacing:0.028px;text-decoration:underline;color:#555;">A-1502-A(11).pdf</span>
<span class="g" style="left:738.6px;top:198.35px;letter-spacing:0.053px;">158.63 KB</span>
<span class="g" style="left:785.2px;top:198.35px;letter-spacing:0.653px;">pdf</span>
<span class="g" style="left:849.2px;top:198.35px;letter-spacing:0.184px;">Drawing</span>
<span class="g" style="left:925.7px;top:198.35px;letter-spacing:0.396px;">Architectural</span>
<span class="g" style="left:1002.5px;top:198.35px;letter-spacing:0.260px;">Draft</span>
<div style="left:395.800px;top:215.65px;width:8.500px;height:8.500px;background:#fff;border:1px solid #858585;border-radius:2px"></div>
<svg style="left:448.800px;top:215.15px" width="10.800" height="9.600" viewBox="0 0 10.800 9.600"><rect x="0" y="0" width="10.800" height="9.600" fill="#c4c4c4" opacity=".62"/><path d="M1.300 1.200h5.800v1.400h2.400v5.800h-5.800v-1.400h-2.400z" fill="#b8b8b8"/><path d="M7.100 1.200h2.400v1.400h-2.400zM1.300 7h2.400v1.400h-2.400z" fill="#fff" opacity=".35"/></svg>
<span class="g" style="left:506.6px;top:214.85px;letter-spacing:-0.368px;">1127</span>
<span class="g" style="left:531.7px;top:214.85px;letter-spacing:-0.052px;">A-1502-A(12)</span>
<span class="g" style="left:627.1px;top:214.85px;letter-spacing:0.023px;text-decoration:underline;color:#555;">A-1502-A(12).pdf</span>
<span class="g" style="left:738.6px;top:214.85px;letter-spacing:0.053px;">158.63 KB</span>
<span class="g" style="left:785.2px;top:214.85px;letter-spacing:0.653px;">pdf</span>
<span class="g" style="left:849.2px;top:214.85px;letter-spacing:0.184px;">Drawing</span>
<span class="g" style="left:925.7px;top:214.85px;letter-spacing:0.396px;">Architectural</span>
<span class="g" style="left:1002.5px;top:214.85px;letter-spacing:0.260px;">Draft</span>
<div style="left:388px;top:220px;width:701px;height:20px;background:#fff"></div>
<div style="left:1052px;top:60px;width:9px;height:160px;background:#fff"></div>
<div style="left:1060px;top:19.500px;width:13.600px;height:200.500px;background:#f1f1f1"></div>
<div style="left:1061.200px;top:34px;width:11.500px;height:100px;background:#c1c1c1"></div>
<svg style="left:1063.500px;top:25px" width="7" height="5" viewBox="0 0 7 5"><path d="M0 4.500L3.500 0.500L7 4.500z" fill="#a3a3a3"/></svg>
<svg style="left:1063.500px;top:209.500px" width="7" height="5" viewBox="0 0 7 5"><path d="M0 0.500L3.500 4.500L7 0.500z" fill="#505050"/></svg>
<div style="left:1074px;top:19.500px;width:1px;height:573.500px;background:#dcdcdc"></div>
<div style="left:388px;top:220px;width:686px;height:1px;background:#d0d0d0"></div>
<div style="left:388px;top:222.700px;width:686px;height:1.300px;background:#8c8c8c"></div>
<div style="left:725.5px;top:220.700px;width:1.300px;height:1.200px;background:#6f9cc0;border-radius:.6px"></div>
<div style="left:728.1px;top:220.700px;width:1.300px;height:1.200px;background:#6f9cc0;border-radius:.6px"></div>
<div style="left:730.7px;top:220.700px;width:1.300px;height:1.200px;background:#6f9cc0;border-radius:.6px"></div>
<div style="left:733.3px;top:220.700px;width:1.300px;height:1.200px;background:#6f9cc0;border-radius:.6px"></div>
<div style="left:735.9px;top:220.700px;width:1.300px;height:1.200px;background:#6f9cc0;border-radius:.6px"></div>
<span class="tab" style="left:400.2px;top:226.300px;color:#e8922e;letter-spacing:-0.190px;">DETAILS</span>
<span class="tab" style="left:456px;top:226.300px;color:#41749a;letter-spacing:-0.100px;">ADDITIONAL INFORMATION</span>
<span class="tab" style="left:581.7px;top:226.300px;color:#41749a;letter-spacing:-0.238px;">CHECKLISTS</span>
<span class="tab" style="left:653.5px;top:226.300px;color:#41749a;letter-spacing:-0.329px;">SCORING</span>
<span class="tab" style="left:712.4px;top:226.300px;color:#41749a;letter-spacing:-0.356px;">RATINGS</span>
<span class="tab" style="left:769.3px;top:226.300px;color:#41749a;letter-spacing:-0.414px;">NOTES</span>
<span class="tab" style="left:819.7px;top:226.300px;color:#41749a;letter-spacing:-0.203px;">ATTACHMENTS (1)</span>
<span class="tab" style="left:910.9px;top:226.300px;color:#41749a;letter-spacing:-0.275px;">WORKFLOW</span>
<span class="tab" style="left:981.5px;top:226.300px;color:#41749a;letter-spacing:-0.135px;">NOTIFICATIONS</span>
<div style="left:392px;top:244px;width:667.500px;height:1px;background:#9c9c9c"></div>
<div style="left:393px;top:242.500px;width:50px;height:1.500px;background:#f0962e"></div>
<div style="left:388px;top:245px;width:671.500px;height:31.500px;background:#ededed"></div>
<div style="left:465.200px;top:245px;width:1px;height:31.500px;background:#7a7a7a"></div>
<div style="left:511px;top:245px;width:1px;height:31.500px;background:#7a7a7a"></div>
<svg style="left:402px;top:252px" width="17" height="17" viewBox="0 0 17 17"><path d="M3.800 5.300A5.800 5.800 0 1 1 3.200 11" fill="none" stroke="#8f8f8f" stroke-width="2.600"/><path d="M0.500 1.600l.6 6 5.600-1.100z" fill="#8f8f8f"/><path d="M8.800 5.100v4.100H6.100" fill="none" stroke="#8f8f8f" stroke-width="1.700"/></svg>
<svg style="left:436px;top:252.500px" width="17" height="16" viewBox="0 0 17 16"><g stroke="#8f8f8f" stroke-width="2.100"><path d="M5.300 3.100h10.400M5.300 7.700h10.400M5.300 12.300h10.400"/></g><g fill="#8f8f8f" font-family="Liberation Sans" font-size="4.800" font-weight="bold"><text x="0.600" y="4.600">1</text><text x="0.600" y="9.200">2</text><text x="0.600" y="13.800">3</text></g></svg>
<svg style="left:482.500px;top:253px" width="16" height="15" viewBox="0 0 16 15"><path d="M1 1h11l3 3v10h-14z" fill="none" stroke="#999" stroke-width="1.300"/><path d="M4 1v4h7v-4" fill="none" stroke="#999" stroke-width="1.200"/><rect x="4.600" y="1" width="3.200" height="3.600" fill="#8a8a8a"/><path d="M3.500 14v-5.500h9v5.500" fill="none" stroke="#999" stroke-width="1.300"/></svg>
<svg style="left:527.800px;top:252.300px" width="16" height="16" viewBox="0 0 16 16"><path d="M8 2.500H1.500v12h12V8" fill="none" stroke="#999" stroke-width="1.900"/><path d="M6.500 9.500L14.500 1.500M9.500 1.200h5.300v5.300" fill="none" stroke="#999" stroke-width="1.900"/></svg>
<span class="g" style="left:403.300px;top:294.2px;color:#666;letter-spacing:0.262px;">Description</span>
<div style="left:505px;top:292.1px;width:153px;height:14.700px;border:1px solid #8f8f8f;background:#fff"></div>
<span class="g" style="left:506px;top:294.2px;color:#444;letter-spacing:-0.085px;">A-1501-A(12)</span>
<span class="g" style="left:403.300px;top:312.4px;color:#666;letter-spacing:0.023px;">Type</span>
<div style="left:505px;top:310.3px;width:153px;height:14.700px;border:1px solid #8f8f8f;background:#fff"></div>
<span class="g" style="left:506px;top:312.4px;color:#444;letter-spacing:0.242px;">Drawing</span>
<div style="left:646px;top:311.4px;width:1px;height:12px;background:#aaa"></div>
<svg style="left:649.500px;top:316.4px" width="5" height="3" viewBox="0 0 5 3"><path d="M0 0h5L2.500 3z" fill="#333"/></svg>
<span class="g" style="left:403.300px;top:330.6px;color:#666;letter-spacing:0.119px;">Category</span>
<div style="left:505px;top:328.5px;width:153px;height:14.700px;border:1px solid #8f8f8f;background:#fff"></div>
<span class="g" style="left:506px;top:330.6px;color:#444;letter-spacing:0.373px;">Architectural</span>
<div style="left:646px;top:329.6px;width:1px;height:12px;background:#aaa"></div>
<svg style="left:649.500px;top:334.6px" width="5" height="3" viewBox="0 0 5 3"><path d="M0 0h5L2.500 3z" fill="#333"/></svg>
<span class="g" style="left:403.300px;top:348.6px;color:#666;letter-spacing:0.098px;">Version</span>
<div style="left:505px;top:346.5px;width:153px;height:14.700px;border:1px solid #8f8f8f;background:#e9e9e9"></div>
<span class="g" style="left:403.300px;top:366.7px;color:#666;letter-spacing:0.315px;">Status</span>
<div style="left:505px;top:364.6px;width:153px;height:14.700px;border:1px solid #8f8f8f;background:#e9e9e9"></div>
<span class="g" style="left:506px;top:366.7px;color:#777;letter-spacing:0.360px;">Draft</span>
<div style="left:646px;top:365.7px;width:1px;height:12px;background:#aaa"></div>
<svg style="left:649.500px;top:370.7px" width="5" height="3" viewBox="0 0 5 3"><path d="M0 0h5L2.500 3z" fill="#333"/></svg>
<span class="g" style="left:640px;top:348.800px;width:16.500px;text-align:right;color:#777">1</span>
<span class="g" style="left:404px;top:385.300px;color:#9a9a9a;font-size:7.400px;letter-spacing:0.030px;">ATTRIBUTES</span>
<div style="left:463.500px;top:390.500px;width:194.500px;height:1px;background:#bdbdbd"></div>
<div style="left:403px;top:401px;width:254.5px;height:19.500px;background:#ededed;border:1px solid #d5d5d5;border-bottom:none"></div>
<svg style="left:413.300px;top:405.300px" width="10" height="10" viewBox="0 0 9 9"><path d="M0.500 8.500l.6-2.600L6.300 0.700l2 2L3.100 7.900z" fill="#8c8c8c"/></svg>
<span class="g" style="left:426.500px;top:405.800px;color:#6e6e6e;letter-spacing:0.240px;">Edit</span>
<div style="left:403px;top:420.500px;width:254.5px;height:22px;background:#949494"></div>
<div style="left:403px;top:420px;width:254.5px;height:1px;background:#6e6e6e"></div>
<div style="left:525.9px;top:421px;width:0;height:21.500px;border-left:1px dotted #b5b5b5"></div>
<span class="gh" style="left:444.500px;top:427.800px;letter-spacing:0.004px;">ATTRIBUTE</span>
<span class="gh" style="left:579.300px;top:427.800px;letter-spacing:0.216px;">VALUE</span>
<span class="g" style="left:409.100px;top:445.475px;letter-spacing:0.223px;">Tracking ID*</span>
<span class="g" style="left:531.100px;top:445.475px;letter-spacing:0.052px;">1879050670</span>
<div style="left:403px;top:456.75px;width:254.5px;height:1px;background:#d4d4d4"></div>
<span class="g" style="left:409.100px;top:460.225px;letter-spacing:0.122px;">ID*(u)</span>
<span class="g" style="left:531.100px;top:460.225px;letter-spacing:0.052px;">1879053356</span>
<div style="left:403px;top:471.5px;width:254.5px;height:1px;background:#d4d4d4"></div>
<span class="g" style="left:409.100px;top:474.975px;letter-spacing:0.432px;">Document Number*</span>
<span class="g" style="left:531.100px;top:474.975px;letter-spacing:-0.175px;">A-1019</span>
<div style="left:403px;top:486.25px;width:254.5px;height:1px;background:#d4d4d4"></div>
<span class="g" style="left:409.100px;top:489.725px;letter-spacing:0.277px;">Location</span>
<span class="g" style="left:627.9px;top:489.725px;letter-spacing:0.060px;">Marina</span>
<div style="left:403px;top:501px;width:254.5px;height:1px;background:#d4d4d4"></div>
<span class="g" style="left:409.100px;top:504.475px;letter-spacing:0.284px;">Confidential</span>
<span class="g" style="left:633.2px;top:504.475px;letter-spacing:-0.034px;">False</span>
<div style="left:403px;top:515.75px;width:254.5px;height:1px;background:#d4d4d4"></div>
<span class="g" style="left:409.100px;top:519.225px;letter-spacing:0.303px;">Author</span>
<span class="g" style="left:581.7px;top:519.225px;letter-spacing:0.291px;">Murphy Consultant</span>
<div style="left:403px;top:530.5px;width:254.5px;height:1px;background:#d4d4d4"></div>
<span class="g" style="left:409.100px;top:533.975px;letter-spacing:-0.168px;">Size</span>
<span class="g" style="left:645.1px;top:533.975px;letter-spacing:-1.270px;">A1</span>
<div style="left:403px;top:545.25px;width:254.5px;height:1px;background:#d4d4d4"></div>
<span class="g" style="left:409.100px;top:548.725px;letter-spacing:0.267px;">Contract Deliverable</span>
<span class="g" style="left:633.2px;top:548.725px;letter-spacing:-0.034px;">False</span>
<div style="left:403px;top:560px;width:254.5px;height:1px;background:#d4d4d4"></div>
<span class="g" style="left:409.100px;top:563.475px;letter-spacing:-0.423px;">WBS</span>
<div style="left:403px;top:574.75px;width:254.5px;height:1px;background:#d4d4d4"></div>
<div style="left:525.9px;top:442.500px;width:1px;height:132.75px;background:#d4d4d4"></div>
<div style="left:403px;top:442.500px;width:1px;height:151px;background:#8e8e8e"></div>
<div style="left:656.5px;top:442.500px;width:1px;height:151px;background:#8e8e8e"></div>
<div style="left:1060px;top:224px;width:13.600px;height:367.700px;background:#f1f1f1"></div>
<div style="left:1061.200px;top:238px;width:11.500px;height:336.500px;background:#c1c1c1"></div>
<svg style="left:1063.500px;top:229px" width="7" height="5" viewBox="0 0 7 5"><path d="M0 4.500L3.500 0.500L7 4.500z" fill="#a3a3a3"/></svg>
<svg style="left:1063.500px;top:582.500px" width="7" height="5" viewBox="0 0 7 5"><path d="M0 0.500L3.500 4.500L7 0.500z" fill="#505050"/></svg>
<svg style="left:790px;top:301px" width="245" height="245" viewBox="790 301 245 245"><defs><pattern id="pg" width="2.700" height="3.400" patternUnits="userSpaceOnUse"><path d="M0 0.200h2.700" stroke="#9a9a9a" stroke-width=".35" fill="none"/><path d="M0.200 0v3.400" stroke="#777" stroke-width=".42" fill="none"/></pattern><pattern id="pd" width="1.900" height="1.700" patternUnits="userSpaceOnUse"><path d="M0 0.200h1.900M0.200 0v1.700" stroke="#666" stroke-width=".45" fill="none"/></pattern><pattern id="pt" width="3" height="1.300" patternUnits="userSpaceOnUse"><path d="M0 0.400h2.400" stroke="#8a8a8a" stroke-width=".45"/></pattern><pattern id="pk" width="4" height="3.200" patternUnits="userSpaceOnUse"><rect x="0" y="0" width="2" height="1.600" fill="#111"/><rect x="2" y="1.600" width="2" height="1.600" fill="#111"/></pattern><filter id="bl" x="-5%" y="-5%" width="110%" height="110%"><feGaussianBlur stdDeviation=".28"/></filter></defs><rect x="790.250" y="301.250" width="244.300" height="244" fill="#fff" stroke="#e3e3e3" stroke-width=".5"/><g filter="url(#bl)"><rect x="793.3" y="310" width="16.9" height="16.7" fill="url(#pd)" stroke="#777" stroke-width=".4"/><rect x="800.905" y="319.185" width="6.76" height="5.01" fill="#fff" stroke="#888" stroke-width=".3"/><rect x="793.3" y="329.7" width="11" height="3.200" fill="url(#pt)"/><rect x="793.3" y="334.2" width="6" height="1.300" fill="url(#pt)"/><rect x="799" y="304.800" width="8" height="6" fill="url(#pd)" stroke="#666" stroke-width=".4"/><rect x="816.8" y="309.2" width="20.4" height="16.4" fill="url(#pg)" stroke="#888" stroke-width=".4"/><path d="M815.3 325.6h23.4" stroke="#777" stroke-width=".4"/><rect x="819.86" y="320.68" width="9.18" height="4.92" fill="url(#pd)" opacity=".8"/><rect x="818.3" y="329.8" width="5.500" height=".8" fill="#8e8e8e"/><rect x="839.8" y="309.2" width="16.5" height="16.4" fill="url(#pg)" stroke="#888" stroke-width=".4"/><path d="M838.3 325.6h19.5" stroke="#777" stroke-width=".4"/><rect x="842.275" y="320.68" width="7.425" height="4.92" fill="url(#pd)" opacity=".8"/><rect x="841.3" y="329.8" width="5.500" height=".8" fill="#8e8e8e"/><rect x="858.5" y="309.2" width="16.4" height="16.4" fill="url(#pg)" stroke="#888" stroke-width=".4"/><path d="M857 325.6h19.4" stroke="#777" stroke-width=".4"/><rect x="860.96" y="320.68" width="7.38" height="4.92" fill="url(#pd)" opacity=".8"/><rect x="860" y="329.8" width="5.500" height=".8" fill="#8e8e8e"/><rect x="879.3" y="309.2" width="15.3" height="16.4" fill="url(#pg)" stroke="#888" stroke-width=".4"/><path d="M877.8 325.6h18.3" stroke="#777" stroke-width=".4"/><rect x="881.595" y="320.68" width="6.885" height="4.92" fill="url(#pd)" opacity=".8"/><rect x="880.8" y="329.8" width="5.500" height=".8" fill="#8e8e8e"/><path d="M814 309.200h82" stroke="#aaa" stroke-width=".3"/><rect x="918.8" y="308" width="18.6" height="16.5" fill="url(#pd)" stroke="#777" stroke-width=".4"/><rect x="927.17" y="317.075" width="7.44" height="4.95" fill="#fff" stroke="#888" stroke-width=".3"/><rect x="918.8" y="327.5" width="11" height="3.200" fill="url(#pt)"/><rect x="918.8" y="332" width="6" height="1.300" fill="url(#pt)"/><rect x="932" y="327.500" width="14" height="3.200" fill="url(#pt)"/><rect x="948.4" y="309.2" width="18.6" height="16.4" fill="url(#pg)" stroke="#888" stroke-width=".4"/><path d="M946.9 325.6h21.6" stroke="#777" stroke-width=".4"/><rect x="951.19" y="320.68" width="8.37" height="4.92" fill="url(#pd)" opacity=".8"/><rect x="949.9" y="329.8" width="5.500" height=".8" fill="#8e8e8e"/><rect x="972" y="309.2" width="11" height="16.4" fill="#fff" stroke="#777" stroke-width=".5"/><path d="M970.5 325.6h14" stroke="#999" stroke-width=".4"/><rect x="973.5" y="329.8" width="5.500" height=".8" fill="#8e8e8e"/><rect x="986.8" y="309.2" width="17.5" height="16.4" fill="url(#pg)" stroke="#888" stroke-width=".4"/><path d="M985.3 325.6h20.5" stroke="#777" stroke-width=".4"/><rect x="989.425" y="320.68" width="7.875" height="4.92" fill="url(#pd)" opacity=".8"/><rect x="988.3" y="329.8" width="5.500" height=".8" fill="#8e8e8e"/><rect x="1008.7" y="309.2" width="10.9" height="16.4" fill="url(#pg)" stroke="#888" stroke-width=".4"/><path d="M1007.2 325.6h13.9" stroke="#777" stroke-width=".4"/><rect x="1010.2" y="329.8" width="5.500" height=".8" fill="#8e8e8e"/><rect x="1023" y="309.2" width="7.6" height="16.4" fill="url(#pd)" stroke="#555" stroke-width=".5"/><rect x="1024.5" y="329.8" width="5.500" height=".8" fill="#8e8e8e"/><path d="M946 309.200h86" stroke="#aaa" stroke-width=".3"/><path d="M793 366l27-31 9 5-8 14-9 12v5h-18z" fill="url(#pd)" stroke="#555" stroke-width=".5"/><rect x="803" y="368" width="9" height="6.500" fill="#fff" stroke="#555" stroke-width=".5"/><rect x="796" y="377" width="11" height="3.200" fill="url(#pt)"/><rect x="810" y="377" width="13" height="3.200" fill="url(#pt)"/><rect x="830" y="342" width="39.4" height="17.6" fill="url(#pg)" stroke="#888" stroke-width=".4"/><path d="M828.5 359.6h42.4" stroke="#777" stroke-width=".4"/><rect x="835.91" y="354.32" width="17.73" height="5.28" fill="url(#pd)" opacity=".8"/><rect x="831.5" y="363.8" width="5.500" height=".8" fill="#8e8e8e"/><rect x="853" y="345" width="9" height="14.600" fill="#fff" stroke="#888" stroke-width=".4"/><rect x="877.1" y="342" width="15.4" height="17.6" fill="url(#pg)" stroke="#888" stroke-width=".4"/><path d="M875.6 359.6h18.4" stroke="#777" stroke-width=".4"/><rect x="879.41" y="354.32" width="6.93" height="5.28" fill="url(#pd)" opacity=".8"/><rect x="878.6" y="363.8" width="5.500" height=".8" fill="#8e8e8e"/><rect x="878" y="344" width="5" height="15.600" fill="#fff" stroke="#888" stroke-width=".4"/><rect x="896.8" y="342" width="19.8" height="17.6" fill="url(#pg)" stroke="#888" stroke-width=".4"/><path d="M895.3 359.6h22.8" stroke="#777" stroke-width=".4"/><rect x="899.77" y="354.32" width="8.91" height="5.28" fill="url(#pd)" opacity=".8"/><rect x="898.3" y="363.8" width="5.500" height=".8" fill="#8e8e8e"/><rect x="926.4" y="342" width="12.1" height="17.6" fill="url(#pg)" stroke="#888" stroke-width=".4"/><path d="M924.9 359.6h15.1" stroke="#777" stroke-width=".4"/><rect x="928.215" y="354.32" width="5.445" height="5.28" fill="url(#pd)" opacity=".8"/><rect x="927.9" y="363.8" width="5.500" height=".8" fill="#8e8e8e"/><path d="M829 342h111" stroke="#aaa" stroke-width=".3"/><rect x="830" y="372.8" width="8.7" height="15.3" fill="url(#pd)" stroke="#777" stroke-width=".4"/><rect x="830" y="391.1" width="11" height="3.200" fill="url(#pt)"/><rect x="830" y="395.6" width="6" height="1.300" fill="url(#pt)"/><rect x="846.4" y="372.5" width="8.8" height="17.8" fill="#fff" stroke="#777" stroke-width=".5"/><path d="M844.9 390.3h11.8" stroke="#999" stroke-width=".4"/><rect x="847.9" y="394.5" width="5.500" height=".8" fill="#8e8e8e"/><rect x="860.7" y="372.5" width="8.7" height="17.8" fill="#fff" stroke="#777" stroke-width=".5"/><path d="M859.2 390.3h11.7" stroke="#999" stroke-width=".4"/><rect x="862.2" y="394.5" width="5.500" height=".8" fill="#8e8e8e"/><rect x="874.9" y="372.5" width="9.9" height="17.8" fill="#fff" stroke="#777" stroke-width=".5"/><path d="M873.4 390.3h12.9" stroke="#999" stroke-width=".4"/><rect x="876.4" y="394.5" width="5.500" height=".8" fill="#8e8e8e"/><rect x="887" y="372.5" width="12" height="17.8" fill="#fff" stroke="#777" stroke-width=".5"/><path d="M885.5 390.3h15" stroke="#999" stroke-width=".4"/><rect x="888.5" y="394.5" width="5.500" height=".8" fill="#8e8e8e"/><rect x="888" y="381" width="8" height="8" fill="url(#pd)" stroke="#666" stroke-width=".4"/><path d="M843 372.500h60" stroke="#aaa" stroke-width=".3"/><rect x="919.9" y="372.8" width="14.2" height="15.2" fill="url(#pd)" stroke="#777" stroke-width=".4"/><rect x="926.29" y="381.16" width="5.68" height="4.56" fill="#fff" stroke="#888" stroke-width=".3"/><rect x="919.9" y="391" width="11" height="3.200" fill="url(#pt)"/><rect x="919.9" y="395.5" width="6" height="1.300" fill="url(#pt)"/><rect x="949.5" y="372.5" width="14.2" height="17.8" fill="url(#pg)" stroke="#888" stroke-width=".4"/><path d="M948 390.3h17.2" stroke="#777" stroke-width=".4"/><rect x="951.63" y="384.96" width="6.39" height="5.34" fill="url(#pd)" opacity=".8"/><rect x="951" y="394.5" width="5.500" height=".8" fill="#8e8e8e"/><rect x="969.6" y="372.5" width="11" height="17.8" fill="url(#pg)" stroke="#888" stroke-width=".4"/><path d="M968.1 390.3h14" stroke="#777" stroke-width=".4"/><rect x="971.1" y="394.5" width="5.500" height=".8" fill="#8e8e8e"/><rect x="985.7" y="372.5" width="15.3" height="17.8" fill="url(#pg)" stroke="#888" stroke-width=".4"/><path d="M984.2 390.3h18.3" stroke="#777" stroke-width=".4"/><rect x="987.995" y="384.96" width="6.885" height="5.34" fill="url(#pd)" opacity=".8"/><rect x="987.2" y="394.5" width="5.500" height=".8" fill="#8e8e8e"/><rect x="1004.3" y="372.5" width="13.2" height="17.8" fill="url(#pg)" stroke="#888" stroke-width=".4"/><path d="M1002.8 390.3h16.2" stroke="#777" stroke-width=".4"/><rect x="1006.28" y="384.96" width="5.94" height="5.34" fill="url(#pd)" opacity=".8"/><rect x="1005.8" y="394.5" width="5.500" height=".8" fill="#8e8e8e"/><rect x="970" y="372.500" width="7" height="3" fill="url(#pd)"/><path d="M947 372.500h82" stroke="#aaa" stroke-width=".3"/><rect x="796" y="403.5" width="16.4" height="8.7" fill="url(#pd)" stroke="#777" stroke-width=".4"/><rect x="796" y="415.2" width="11" height="3.200" fill="url(#pt)"/><rect x="796" y="419.7" width="6" height="1.300" fill="url(#pt)"/><rect x="796" y="419" width="14" height="3.200" fill="url(#pt)"/><rect x="823.4" y="402.4" width="19.7" height="17.5" fill="url(#pg)" stroke="#888" stroke-width=".4"/><path d="M821.9 419.9h22.7" stroke="#777" stroke-width=".4"/><rect x="826.355" y="414.65" width="8.865" height="5.25" fill="url(#pd)" opacity=".8"/><rect x="824.9" y="424.1" width="5.500" height=".8" fill="#8e8e8e"/><rect x="847" y="402.4" width="6" height="17.5" fill="#fff" stroke="#777" stroke-width=".5"/><path d="M845.5 419.9h9" stroke="#999" stroke-width=".4"/><rect x="848.5" y="424.1" width="5.500" height=".8" fill="#8e8e8e"/><rect x="856.9" y="402.4" width="6.6" height="17.5" fill="url(#pd)" stroke="#555" stroke-width=".5"/><rect x="858.4" y="424.1" width="5.500" height=".8" fill="#8e8e8e"/><rect x="868.3" y="402.4" width="6.6" height="17.5" fill="url(#pg)" stroke="#888" stroke-width=".4"/><path d="M866.8 419.9h9.6" stroke="#777" stroke-width=".4"/><rect x="869.8" y="424.1" width="5.500" height=".8" fill="#8e8e8e"/><rect x="880.4" y="402.4" width="18.6" height="17.5" fill="url(#pg)" stroke="#888" stroke-width=".4"/><path d="M878.9 419.9h21.6" stroke="#777" stroke-width=".4"/><rect x="883.19" y="414.65" width="8.37" height="5.25" fill="url(#pd)" opacity=".8"/><rect x="881.9" y="424.1" width="5.500" height=".8" fill="#8e8e8e"/><path d="M821 402.400h82" stroke="#aaa" stroke-width=".3"/><rect x="919.9" y="403.5" width="17.5" height="13.1" fill="url(#pd)" stroke="#777" stroke-width=".4"/><rect x="927.775" y="410.705" width="7" height="3.93" fill="#fff" stroke="#888" stroke-width=".3"/><rect x="919.9" y="419.6" width="11" height="3.200" fill="url(#pt)"/><rect x="919.9" y="424.1" width="6" height="1.300" fill="url(#pt)"/><rect x="949.5" y="402.4" width="19.3" height="16.4" fill="url(#pg)" stroke="#888" stroke-width=".4"/><path d="M948 418.8h22.3" stroke="#777" stroke-width=".4"/><rect x="952.395" y="413.88" width="8.685" height="4.92" fill="url(#pd)" opacity=".8"/><rect x="951" y="423" width="5.500" height=".8" fill="#8e8e8e"/><rect x="973.6" y="402.4" width="9.4" height="16.4" fill="url(#pg)" stroke="#888" stroke-width=".4"/><path d="M972.1 418.8h12.4" stroke="#777" stroke-width=".4"/><rect x="975.1" y="423" width="5.500" height=".8" fill="#8e8e8e"/><rect x="989" y="402.4" width="18.1" height="16.4" fill="url(#pg)" stroke="#888" stroke-width=".4"/><path d="M987.5 418.8h21.1" stroke="#777" stroke-width=".4"/><rect x="991.715" y="413.88" width="8.145" height="4.92" fill="url(#pd)" opacity=".8"/><rect x="990.5" y="423" width="5.500" height=".8" fill="#8e8e8e"/><rect x="1012.6" y="402.4" width="10.4" height="16.4" fill="url(#pg)" stroke="#888" stroke-width=".4"/><path d="M1011.1 418.8h13.4" stroke="#777" stroke-width=".4"/><rect x="1014.1" y="423" width="5.500" height=".8" fill="#8e8e8e"/><path d="M947 402.400h80" stroke="#aaa" stroke-width=".3"/><rect x="796" y="432" width="9.8" height="15.4" fill="url(#pd)" stroke="#777" stroke-width=".4"/><rect x="800.41" y="440.47" width="3.92" height="4.62" fill="#fff" stroke="#888" stroke-width=".3"/><rect x="796" y="450.4" width="11" height="3.200" fill="url(#pt)"/><rect x="796" y="454.9" width="6" height="1.300" fill="url(#pt)"/><rect x="823.4" y="429" width="9.8" height="17.3" fill="#fff" stroke="#777" stroke-width=".5"/><path d="M821.9 446.3h12.8" stroke="#999" stroke-width=".4"/><rect x="824.9" y="450.5" width="5.500" height=".8" fill="#8e8e8e"/><rect x="838.7" y="429" width="9.9" height="17.3" fill="#fff" stroke="#777" stroke-width=".5"/><path d="M837.2 446.3h12.9" stroke="#999" stroke-width=".4"/><rect x="840.2" y="450.5" width="5.500" height=".8" fill="#8e8e8e"/><rect x="853.4" y="429" width="9.5" height="17.3" fill="#fff" stroke="#777" stroke-width=".5"/><path d="M851.9 446.3h12.5" stroke="#999" stroke-width=".4"/><rect x="854.9" y="450.5" width="5.500" height=".8" fill="#8e8e8e"/><rect x="867.9" y="429" width="11.4" height="17.3" fill="#fff" stroke="#777" stroke-width=".5"/><path d="M866.4 446.3h14.4" stroke="#999" stroke-width=".4"/><rect x="869.4" y="450.5" width="5.500" height=".8" fill="#8e8e8e"/><rect x="868" y="438" width="9" height="8" fill="url(#pg)"/><path d="M821 429h62" stroke="#aaa" stroke-width=".3"/><rect x="921" y="430" width="9.8" height="18.5" fill="url(#pd)" stroke="#777" stroke-width=".4"/><rect x="925.41" y="440.175" width="3.92" height="5.55" fill="#fff" stroke="#888" stroke-width=".3"/><rect x="921" y="451.5" width="11" height="3.200" fill="url(#pt)"/><rect x="921" y="456" width="6" height="1.300" fill="url(#pt)"/><rect x="949.5" y="431" width="8.7" height="16.4" fill="#fff" stroke="#777" stroke-width=".5"/><path d="M948 447.4h11.7" stroke="#999" stroke-width=".4"/><rect x="951" y="451.6" width="5.500" height=".8" fill="#8e8e8e"/><rect x="963.7" y="431" width="12.1" height="16.4" fill="#fff" stroke="#777" stroke-width=".5"/><path d="M962.2 447.4h15.1" stroke="#999" stroke-width=".4"/><rect x="965.2" y="451.6" width="5.500" height=".8" fill="#8e8e8e"/><rect x="980.6" y="431" width="8.8" height="16.4" fill="#fff" stroke="#777" stroke-width=".5"/><path d="M979.1 447.4h11.8" stroke="#999" stroke-width=".4"/><rect x="982.1" y="451.6" width="5.500" height=".8" fill="#8e8e8e"/><rect x="994.4" y="431" width="12.1" height="16.4" fill="#fff" stroke="#777" stroke-width=".5"/><path d="M992.9 447.4h15.1" stroke="#999" stroke-width=".4"/><rect x="995.9" y="451.6" width="5.500" height=".8" fill="#8e8e8e"/><rect x="994.400" y="440" width="12" height="7" fill="url(#pd)"/><path d="M947 431h62" stroke="#aaa" stroke-width=".3"/><rect x="1024.500" y="434.300" width="7" height="34" fill="url(#pt)"/><rect x="1024.500" y="470" width="9" height="1" fill="#555"/><path d="M795.500 459.500h10v6h7v9h-7v4.700h-10z" fill="url(#pd)" stroke="#555" stroke-width=".5"/><rect x="796" y="482" width="11" height="3.200" fill="url(#pt)"/><rect x="823.4" y="459.5" width="17.5" height="18.6" fill="url(#pg)" stroke="#888" stroke-width=".4"/><path d="M821.9 478.1h20.5" stroke="#777" stroke-width=".4"/><rect x="826.025" y="472.52" width="7.875" height="5.58" fill="url(#pd)" opacity=".8"/><rect x="824.9" y="482.3" width="5.500" height=".8" fill="#8e8e8e"/><rect x="846.4" y="459.5" width="8.8" height="18.6" fill="url(#pg)" stroke="#888" stroke-width=".4"/><path d="M844.9 478.1h11.8" stroke="#777" stroke-width=".4"/><rect x="847.9" y="482.3" width="5.500" height=".8" fill="#8e8e8e"/><rect x="859.6" y="459.5" width="17.5" height="18.6" fill="url(#pg)" stroke="#888" stroke-width=".4"/><path d="M858.1 478.1h20.5" stroke="#777" stroke-width=".4"/><rect x="862.225" y="472.52" width="7.875" height="5.58" fill="url(#pd)" opacity=".8"/><rect x="861.1" y="482.3" width="5.500" height=".8" fill="#8e8e8e"/><rect x="881.5" y="459.5" width="13.1" height="18.6" fill="url(#pg)" stroke="#888" stroke-width=".4"/><path d="M880 478.1h16.1" stroke="#777" stroke-width=".4"/><rect x="883.465" y="472.52" width="5.895" height="5.58" fill="url(#pd)" opacity=".8"/><rect x="883" y="482.3" width="5.500" height=".8" fill="#8e8e8e"/><rect x="884.500" y="462" width="6.500" height="8" fill="#fff" stroke="#666" stroke-width=".5"/><path d="M821 459.500h78" stroke="#aaa" stroke-width=".3"/><rect x="920.5" y="462.8" width="8.1" height="23" fill="url(#pd)" stroke="#777" stroke-width=".4"/><rect x="920.5" y="488.8" width="11" height="3.200" fill="url(#pt)"/><rect x="920.5" y="493.3" width="6" height="1.300" fill="url(#pt)"/><rect x="949.5" y="463" width="9.2" height="18.4" fill="url(#pg)" stroke="#888" stroke-width=".4"/><path d="M948 481.4h12.2" stroke="#777" stroke-width=".4"/><rect x="951" y="485.6" width="5.500" height=".8" fill="#8e8e8e"/><rect x="963.7" y="463" width="16.5" height="18.4" fill="url(#pg)" stroke="#888" stroke-width=".4"/><path d="M962.2 481.4h19.5" stroke="#777" stroke-width=".4"/><rect x="966.175" y="475.88" width="7.425" height="5.52" fill="url(#pd)" opacity=".8"/><rect x="965.2" y="485.6" width="5.500" height=".8" fill="#8e8e8e"/><rect x="984.6" y="463" width="9.8" height="18.4" fill="url(#pg)" stroke="#888" stroke-width=".4"/><path d="M983.1 481.4h12.8" stroke="#777" stroke-width=".4"/><rect x="986.1" y="485.6" width="5.500" height=".8" fill="#8e8e8e"/><rect x="997.7" y="463" width="19.8" height="18.4" fill="url(#pg)" stroke="#888" stroke-width=".4"/><path d="M996.2 481.4h22.8" stroke="#777" stroke-width=".4"/><rect x="1000.67" y="475.88" width="8.91" height="5.52" fill="url(#pd)" opacity=".8"/><rect x="999.2" y="485.6" width="5.500" height=".8" fill="#8e8e8e"/><path d="M947 463h72" stroke="#aaa" stroke-width=".3"/><rect x="795.5" y="488" width="11.4" height="23" fill="url(#pd)" stroke="#777" stroke-width=".4"/><rect x="800.63" y="500.65" width="4.56" height="6.9" fill="#fff" stroke="#888" stroke-width=".3"/><rect x="795.5" y="514" width="11" height="3.200" fill="url(#pt)"/><rect x="795.5" y="518.5" width="6" height="1.300" fill="url(#pt)"/><rect x="797" y="490" width="7.500" height="5" fill="#fff" stroke="#444" stroke-width=".5"/><rect x="824.5" y="492.4" width="9.8" height="17.5" fill="url(#pg)" stroke="#888" stroke-width=".4"/><path d="M823 509.9h12.8" stroke="#777" stroke-width=".4"/><rect x="826" y="514.1" width="5.500" height=".8" fill="#8e8e8e"/><rect x="839.8" y="492.4" width="17.6" height="17.5" fill="url(#pg)" stroke="#888" stroke-width=".4"/><path d="M838.3 509.9h20.6" stroke="#777" stroke-width=".4"/><rect x="842.44" y="504.65" width="7.92" height="5.25" fill="url(#pd)" opacity=".8"/><rect x="841.3" y="514.1" width="5.500" height=".8" fill="#8e8e8e"/><rect x="862.9" y="492.4" width="10.9" height="17.5" fill="url(#pg)" stroke="#888" stroke-width=".4"/><path d="M861.4 509.9h13.9" stroke="#777" stroke-width=".4"/><rect x="864.4" y="514.1" width="5.500" height=".8" fill="#8e8e8e"/><rect x="877.1" y="492.4" width="17.5" height="17.5" fill="url(#pg)" stroke="#888" stroke-width=".4"/><path d="M875.6 509.9h20.5" stroke="#777" stroke-width=".4"/><rect x="879.725" y="504.65" width="7.875" height="5.25" fill="url(#pd)" opacity=".8"/><rect x="878.6" y="514.1" width="5.500" height=".8" fill="#8e8e8e"/><rect x="824.500" y="505" width="9.800" height="4.900" fill="url(#pd)"/><path d="M821 492.400h78" stroke="#aaa" stroke-width=".3"/><rect x="920.5" y="494.6" width="19.1" height="13.1" fill="url(#pd)" stroke="#777" stroke-width=".4"/><rect x="929.095" y="501.805" width="7.64" height="3.93" fill="#fff" stroke="#888" stroke-width=".3"/><rect x="920.5" y="510.7" width="11" height="3.200" fill="url(#pt)"/><rect x="920.5" y="515.2" width="6" height="1.300" fill="url(#pt)"/><rect x="955" y="492.4" width="20.8" height="17.5" fill="url(#pg)" stroke="#888" stroke-width=".4"/><path d="M953.5 509.9h23.8" stroke="#777" stroke-width=".4"/><rect x="958.12" y="504.65" width="9.36" height="5.25" fill="url(#pd)" opacity=".8"/><rect x="956.5" y="514.1" width="5.500" height=".8" fill="#8e8e8e"/><rect x="980.6" y="492.4" width="11.6" height="17.5" fill="url(#pg)" stroke="#888" stroke-width=".4"/><path d="M979.1 509.9h14.6" stroke="#777" stroke-width=".4"/><rect x="982.1" y="514.1" width="5.500" height=".8" fill="#8e8e8e"/><rect x="995.5" y="492.4" width="19.8" height="17.5" fill="url(#pg)" stroke="#888" stroke-width=".4"/><path d="M994 509.9h22.8" stroke="#777" stroke-width=".4"/><rect x="998.47" y="504.65" width="8.91" height="5.25" fill="url(#pd)" opacity=".8"/><rect x="997" y="514.1" width="5.500" height=".8" fill="#8e8e8e"/><rect x="1020.7" y="492.4" width="9.9" height="17.5" fill="url(#pg)" stroke="#888" stroke-width=".4"/><path d="M1019.2 509.9h12.9" stroke="#777" stroke-width=".4"/><rect x="1022.2" y="514.1" width="5.500" height=".8" fill="#8e8e8e"/><rect x="1020.700" y="504" width="9.900" height="5.900" fill="url(#pd)"/><path d="M950 492.400h84" stroke="#aaa" stroke-width=".3"/><path d="M790.500 518.700h244" stroke="#cfcfcf" stroke-width=".5"/><rect x="790.500" y="523.100" width="243.800" height="21.400" fill="#fff" stroke="#c4c4c4" stroke-width=".4"/><rect x="791" y="524" width="12" height="2" fill="#555"/><rect x="791" y="527.500" width="23" height="13.500" fill="url(#pt)"/><rect x="791" y="533" width="23" height="8" fill="url(#pd)" opacity=".55"/><rect x="816" y="523" width="49" height="18.500" fill="url(#pt)" opacity=".8"/><g stroke="#aaa" stroke-width=".3"><path d="M815.700 523v22M822 523v18M836 523v18M845 523v18M852 523v18M865 523v22M815.700 528h49"/></g><rect x="790.500" y="541.700" width="74.500" height="3.200" fill="url(#pk)"/><rect x="806" y="543.300" width="9" height="1.700" fill="#111"/><rect x="826" y="543.300" width="10" height="1.700" fill="#111"/><rect x="850" y="543.300" width="14" height="1.700" fill="#111"/><ellipse cx="872.700" cy="534" rx="5.500" ry="9" fill="none" stroke="#888" stroke-width=".4"/><path d="M866 534h13.500M872.700 524v20" stroke="#aaa" stroke-width=".3"/><rect x="872.500" y="533" width="6" height="1.600" fill="#222"/><path d="M879.700 523v22M941.400 523v22M966.400 523v22M1003.400 523v22" stroke="#c4c4c4" stroke-width=".4"/><path d="M904 525h3.300l3.700 12h-3.200z" fill="#111"/><rect x="911.600" y="525" width="4.400" height="12" fill="#111"/><text x="904" y="542.300" font-family="Liberation Sans" font-size="3.400" fill="#333" textLength="12" lengthAdjust="spacingAndGlyphs">MARSM</text><rect x="923" y="527" width="14.600" height="1.200" fill="#444"/><rect x="923" y="528.900" width="9" height="1.200" fill="#444"/><rect x="923.400" y="535" width="12" height="1.300" fill="#444"/><rect x="947" y="527" width="11" height="5.500" fill="url(#pt)"/><rect x="947" y="536" width="14" height="5" fill="url(#pt)"/><ellipse cx="976.200" cy="529" rx="1.900" ry="2.800" fill="none" stroke="#111" stroke-width="1"/><text x="969.600" y="538.900" font-family="Liberation Sans" font-weight="bold" font-size="6.800" fill="#111" textLength="13.300" lengthAdjust="spacingAndGlyphs">E/E</text><text x="969.600" y="542.500" font-family="Liberation Sans" font-size="2.400" fill="#333" textLength="13.300" lengthAdjust="spacingAndGlyphs">ARCHITECTURE</text><rect x="988.300" y="525" width="12.900" height="4" fill="#111"/><rect x="988.300" y="531.9" width="12.900" height="3.7" fill="#111"/><rect x="988.300" y="538.5" width="12.900" height="4.1" fill="#111"/><rect x="1005" y="525.300" width="28.500" height="4" fill="url(#pt)"/><rect x="1005" y="525.300" width="28.500" height="4" fill="#888" opacity=".35"/><rect x="1010" y="532.500" width="4" height="1" fill="#777"/><rect x="1017" y="532.500" width="7" height="1" fill="#555"/><rect x="1008" y="538" width="3" height="1" fill="#777"/><rect x="1014" y="541" width="3" height="1.200" fill="#222"/><rect x="1019" y="541" width="2.500" height="1.200" fill="#222"/><rect x="1024" y="541" width="2.500" height="1.200" fill="#222"/><rect x="1030" y="541" width="1" height="1.200" fill="#222"/></g></svg>
</div></body>
</html>
